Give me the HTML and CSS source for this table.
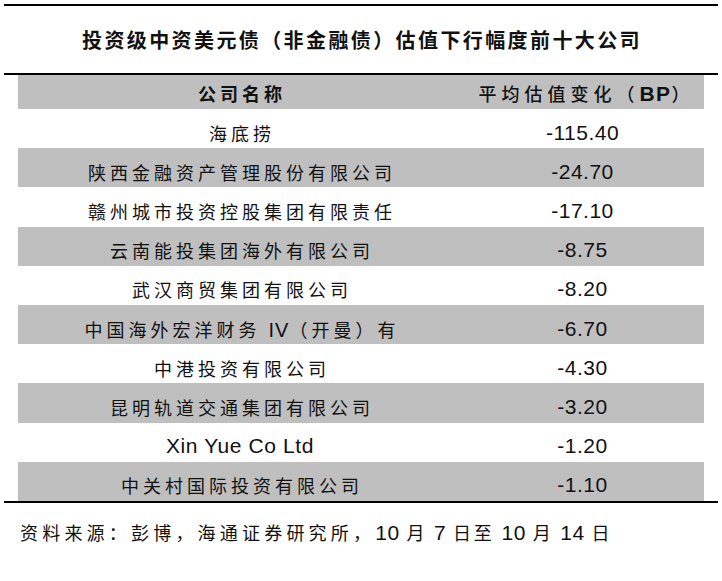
FILE: index.html
```html
<!DOCTYPE html>
<html lang="zh-CN">
<head>
<meta charset="utf-8">
<title>投资级中资美元债估值下行幅度前十大公司</title>
<link rel="stylesheet" href="styles.css">
</head>
<body>
<div class="page">
  <div class="title">投资级中资美元债（非金融债）估值下行幅度前十大公司</div>
  <div class="table">
    <div class="row head">
      <div class="cell name">公司名称</div>
      <div class="cell val"><span class="cjk">平均估值变化（</span><span class="bp">BP</span><span class="cjk">）</span></div>
    </div>
    <div class="row">
      <div class="cell name">海底捞</div>
      <div class="cell val">-115.40</div>
    </div>
    <div class="row alt">
      <div class="cell name">陕西金融资产管理股份有限公司</div>
      <div class="cell val">-24.70</div>
    </div>
    <div class="row">
      <div class="cell name">赣州城市投资控股集团有限责任</div>
      <div class="cell val">-17.10</div>
    </div>
    <div class="row alt">
      <div class="cell name">云南能投集团海外有限公司</div>
      <div class="cell val">-8.75</div>
    </div>
    <div class="row">
      <div class="cell name">武汉商贸集团有限公司</div>
      <div class="cell val">-8.20</div>
    </div>
    <div class="row alt">
      <div class="cell name">中国海外宏洋财务 <span class="roman">IV</span>（开曼）有</div>
      <div class="cell val">-6.70</div>
    </div>
    <div class="row">
      <div class="cell name">中港投资有限公司</div>
      <div class="cell val">-4.30</div>
    </div>
    <div class="row alt">
      <div class="cell name">昆明轨道交通集团有限公司</div>
      <div class="cell val">-3.20</div>
    </div>
    <div class="row">
      <div class="cell name latin">Xin Yue Co Ltd</div>
      <div class="cell val">-1.20</div>
    </div>
    <div class="row alt last">
      <div class="cell name">中关村国际投资有限公司</div>
      <div class="cell val">-1.10</div>
    </div>
  </div>
  <div class="source">资料来源：彭博，海通证券研究所，<span class="tail"><span class="num">10</span> 月 <span class="num">7</span> 日至 <span class="num">10</span> 月 <span class="num">14</span> 日</span></div>
</div>
</body>
</html>
```

FILE: styles.css
```css
html, body {
  margin: 0;
  padding: 0;
  background: #ffffff;
}

body {
  width: 722px;
  height: 581px;
  overflow: hidden;
  font-family: "Noto Sans CJK SC", "Liberation Sans", sans-serif;
  color: #111111;
}

.page {
  padding: 4px 4px 0 4px;
}

.title {
  border-top: 2px solid #000;
  border-bottom: 2px solid #000;
  height: 67px;
  display: flex;
  align-items: center;
  justify-content: center;
  font-size: 20px;
  font-weight: 700;
  letter-spacing: 2.4px;
  padding-left: 2px;
}

.table {
  padding: 0 14px;
  border-bottom: 2px solid #000;
}

.row {
  display: grid;
  grid-template-columns: 444px 241px;
  height: 39.2px;
  box-sizing: border-box;
  padding-top: 8px;
  align-items: center;
}

.row.alt {
  background: #bfbfbf;
}

.row.head {
  background: #bfbfbf;
  height: 34px;
  padding-top: 2px;
}

.cell {
  text-align: center;
  white-space: nowrap;
}

.name {
  font-size: 18px;
  letter-spacing: 4px;
  padding-left: 4px;
}

.name .roman {
  font-family: "Liberation Sans", sans-serif;
  font-size: 20px;
  letter-spacing: 1px;
}

.name.latin {
  font-family: "Liberation Sans", sans-serif;
  font-size: 21px;
  letter-spacing: 0.6px;
  padding-left: 0;
}

.val {
  font-family: "Liberation Sans", sans-serif;
  font-size: 21px;
  letter-spacing: 0.5px;
}

.head .name {
  font-weight: 700;
  font-size: 18px;
}

.head .val {
  font-size: 18px;
  padding-left: 8px;
}

.head .cjk {
  font-family: "Noto Sans CJK SC", sans-serif;
  font-weight: 500;
  letter-spacing: 5px;
}

.head .bp {
  font-family: "Liberation Sans", sans-serif;
  font-weight: 700;
  font-size: 21px;
  letter-spacing: 1.5px;
}

.source {
  padding: 16px 0 0 16px;
  font-size: 18px;
  letter-spacing: 4.2px;
  white-space: nowrap;
}

.source .tail {
  letter-spacing: 2.8px;
}

.source .num {
  font-family: "Liberation Sans", sans-serif;
  font-size: 21px;
  letter-spacing: 0.5px;
}
```
